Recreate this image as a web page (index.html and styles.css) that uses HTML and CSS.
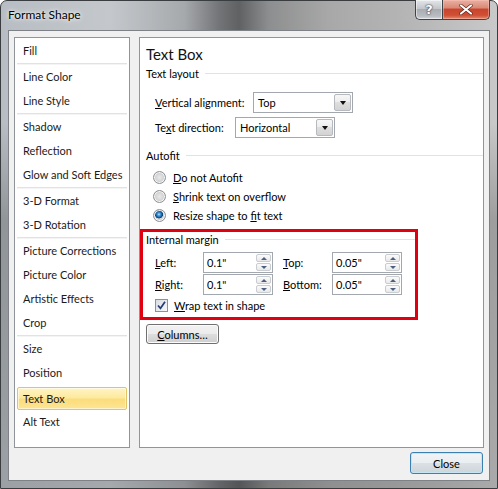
FILE: index.html
```html
<!DOCTYPE html>
<html>
<head>
<meta charset="utf-8">
<title>Format Shape</title>
<link rel="stylesheet" href="styles.css">
</head>
<body>
<div class="window">
  <div class="titlebar">
    <span class="title">Format Shape</span>
    <div class="caption">
      <div class="cbtn help">?</div>
      <div class="cbtn close">
        <svg width="14" height="11" viewBox="0 0 14 11"><path d="M2 1.5 L12 9.5 M12 1.5 L2 9.5" stroke="#5a1f14" stroke-width="3.4" stroke-linecap="round"/><path d="M2 1.5 L12 9.5 M12 1.5 L2 9.5" stroke="#fff" stroke-width="2.2" stroke-linecap="round"/></svg>
      </div>
    </div>
  </div>
  <div class="client">
    <div class="panes">
      <ul class="nav">
        <li class="item">Fill</li>
        <li class="sep"></li>
        <li class="item">Line Color</li>
        <li class="item">Line Style</li>
        <li class="sep"></li>
        <li class="item">Shadow</li>
        <li class="item">Reflection</li>
        <li class="item">Glow and Soft Edges</li>
        <li class="sep"></li>
        <li class="item">3-D Format</li>
        <li class="item">3-D Rotation</li>
        <li class="sep"></li>
        <li class="item">Picture Corrections</li>
        <li class="item">Picture Color</li>
        <li class="item">Artistic Effects</li>
        <li class="item">Crop</li>
        <li class="sep"></li>
        <li class="item">Size</li>
        <li class="item">Position</li>
        <li class="item selected">Text Box</li>
        <li class="item">Alt Text</li>
      </ul>
      <div class="content">
        <div class="pane-title">Text Box</div>
        <div class="group-head head-layout">Text layout</div>
        <div class="field-row row-valign">
          <span class="lbl lbl-valign"><u>V</u>ertical alignment:</span>
          <div class="combo"><span class="combo-val">Top</span><span class="combo-btn"><span class="tri"></span></span></div>
        </div>
        <div class="field-row row-dir">
          <span class="lbl lbl-dir">Te<u>x</u>t direction:</span>
          <div class="combo"><span class="combo-val">Horizontal</span><span class="combo-btn"><span class="tri"></span></span></div>
        </div>
        <div class="group-head head-autofit">Autofit</div>
        <div class="radios">
          <div class="radio-row"><span class="radio"></span><span class="rtext"><u>D</u>o not Autofit</span></div>
          <div class="radio-row"><span class="radio"></span><span class="rtext"><u>S</u>hrink text on overflow</span></div>
          <div class="radio-row"><span class="radio on"></span><span class="rtext">Resize shape to <u>f</u>it text</span></div>
        </div>
        <div class="highlight">
          <div class="group-head head-margin">Internal margin</div>
          <div class="mgrid">
            <span class="lbl"><u>L</u>eft:</span>
            <div class="spin-input"><span class="val">0.1"</span><span class="spin"><span class="sb up"></span><span class="sb dn"></span></span></div>
            <span></span>
            <span class="lbl"><u>T</u>op:</span>
            <div class="spin-input"><span class="val">0.05"</span><span class="spin"><span class="sb up"></span><span class="sb dn"></span></span></div>
            <span class="lbl"><u>R</u>ight:</span>
            <div class="spin-input"><span class="val">0.1"</span><span class="spin"><span class="sb up"></span><span class="sb dn"></span></span></div>
            <span></span>
            <span class="lbl"><u>B</u>ottom:</span>
            <div class="spin-input"><span class="val">0.05"</span><span class="spin"><span class="sb up"></span><span class="sb dn"></span></span></div>
          </div>
          <div class="check-row">
            <span class="check"><svg width="11" height="11" viewBox="0 0 11 11"><path d="M2 5.5 L4.5 8.3 L9 1.8" fill="none" stroke="#253b78" stroke-width="1.7"/></svg></span>
            <span class="ctext"><u>W</u>rap text in shape</span>
          </div>
        </div>
        <button class="btn btn-columns"><u>C</u>olumns…</button>
      </div>
    </div>
    <div class="footer">
      <button class="btn btn-default">Close</button>
    </div>
  </div>
</div>
</body>
</html>
```

FILE: styles.css
```css
* { box-sizing: border-box; margin: 0; padding: 0; }
html, body { width: 498px; height: 489px; overflow: hidden; background: #fff; }
body { font-family: Lato, "Liberation Sans", sans-serif; font-size: 11px; color: #000; }
u { text-decoration: underline; text-underline-offset: 1px; }

.window {
  width: 498px; height: 489px;
  display: flex; flex-direction: column;
  border: 1px solid #3a3d40;
  border-radius: 7px 7px 0 0;
  padding: 0 7px 7px 7px;
  background:
    linear-gradient(180deg, rgba(0,0,0,0) 0, rgba(0,0,0,0) 25%, rgba(30,30,30,.25) 45%, rgba(30,30,30,.18) 100%),
    linear-gradient(90deg, #b7bdc3 0%, #c4c8cc 22%, #a6a9ac 37%, #727477 44%, #5f6163 48%, #8d8e8f 54%, #a8a8a8 66%, #b9b9b9 86%, #c9c9c9 100%);
}

.titlebar { height: 29px; display: flex; align-items: flex-start; }
.title { margin-left: 0; line-height: 28px; font-size: 12px; color: #000; text-shadow: 0 0 6px rgba(255,255,255,.9), 0 0 3px rgba(255,255,255,.9); }
.caption { margin-left: auto; margin-top: -1px; display: flex; }
.cbtn { height: 20px; display: flex; align-items: center; justify-content: center; border: 1px solid #3f4347; border-top: none; }
.help {
  width: 27px; border-radius: 0 0 0 5px; border-right: none;
  background: linear-gradient(#e4e7ea, #c3c7cb 45%, #a9adb1 50%, #b9bdc1 85%, #d5d8db);
  color: #fff; font-family: "DejaVu Sans", sans-serif; font-weight: bold; font-size: 13px;
  text-shadow: 0 0 2px #333, 0 0 1px #222;
  box-shadow: inset 0 0 0 1px rgba(255,255,255,.5);
}
.close {
  width: 48px; border-radius: 0 0 5px 0;
  background: linear-gradient(#eab0a2, #d98b78 40%, #c9452d 50%, #cf4f34 80%, #e48a6c);
  box-shadow: inset 0 0 0 1px rgba(255,200,190,.45);
}

.client {
  width: 482px; height: 451px;
  background: #f0f0f0;
  border: 1px solid #7e8286;
  padding: 6px 5px 0 5px;
  display: flex; flex-direction: column;
}
.panes { display: flex; gap: 9px; height: 411px; }

.nav {
  width: 116px; height: 411px;
  background: #fff; border: 1px solid #8f959b;
  list-style: none; padding: 1px 2px 0 2px;
}
.item { height: 24px; line-height: 24px; padding-left: 6px; white-space: nowrap; color: #1b1b1b; }
.sep { height: 2px; background: linear-gradient(#e2e2e2 50%, #f4f4f4 50%); }
.selected {
  margin-top: 2px; height: 23px; line-height: 21px; padding-left: 5px;
  border: 1px solid #e2c36a; border-radius: 2px;
  background: linear-gradient(#fff4c4, #fde9a0 45%, #fcdd7c 55%, #fde594);
  box-shadow: inset 0 0 0 1px rgba(255,255,255,.55);
}

.content {
  flex: 1; height: 411px;
  background: #fff; border: 1px solid #8f959b;
  display: flex; flex-direction: column; align-items: flex-start;
}
.pane-title { margin: 6px 0 0 6px; font-size: 15px; line-height: 20px; color: #111; }
.group-head { display: flex; align-items: center; height: 16px; margin-left: 6px; align-self: stretch; white-space: nowrap; }
.group-head::after { content: ""; flex: 1; height: 1px; background: #dfe3e6; margin-left: 6px; }
.head-layout { margin-top: 1px; }
.head-autofit { margin-top: 9px; }

.field-row { display: flex; align-items: center; height: 21px; margin-left: 15px; }
.row-valign { margin-top: 11px; }
.row-dir { margin-top: 4px; }
.lbl { white-space: nowrap; }
.lbl-valign { width: 98px; }
.lbl-dir { width: 80px; }

.combo {
  width: 100px; height: 21px;
  border: 1px solid #a3a8ae; background: #fff;
  display: flex; align-items: center; padding: 1px;
}
.combo-val { flex: 1; padding-left: 3px; }
.combo-btn {
  width: 17px; height: 17px;
  border: 1px solid #b6b9bd; border-radius: 2px;
  background: linear-gradient(#f7f7f7, #ececec 50%, #dedede 50%, #d3d3d3);
  display: flex; align-items: center; justify-content: center;
}
.tri { width: 0; height: 0; border-left: 3.5px solid transparent; border-right: 3.5px solid transparent; border-top: 4px solid #111; }

.radios { margin-top: 5px; margin-left: 13px; }
.radio-row { display: flex; align-items: center; height: 19px; }
.radio {
  width: 13px; height: 13px; border-radius: 50%;
  border: 1px solid #8d9196;
  background: radial-gradient(circle at 50% 50%, #e9e9e9 0, #d7d7d7 45%, #c4c4c4 70%, #f1f1f1 100%);
  box-shadow: inset 0 0 0 1px #f6f6f6;
}
.radio.on {
  background:
    radial-gradient(circle at 45% 40%, #c8ecff 0, #4fa7e3 1.2px, #1665a8 2.8px, #0d3f73 3.8px, rgba(0,0,0,0) 4.3px),
    radial-gradient(circle at 50% 50%, #e9e9e9 0, #d7d7d7 45%, #c4c4c4 70%, #f1f1f1 100%);
}
.rtext { margin-left: 7px; white-space: nowrap; }

.highlight {
  margin-top: 4px; width: 278px; height: 91px;
  border: 3px solid #e1000f;
  padding: 0 0 0 3px;
  display: flex; flex-direction: column;
}
.head-margin { margin-left: 0; height: 15px; }
.mgrid {
  margin-top: 5px; margin-left: 9px;
  display: grid;
  grid-template-columns: 48px 70px 10px 49px 70px;
  grid-auto-rows: 21px; row-gap: 1px;
  align-items: center;
}
.spin-input {
  width: 70px; height: 21px;
  border: 1px solid #a3a8ae; background: #fff;
  display: flex; align-items: stretch; padding: 1px;
}
.val { flex: 1; padding-left: 2px; line-height: 17px; }
.spin { width: 15px; display: flex; flex-direction: column; gap: 1px; }
.sb {
  flex: 1; border: 1px solid #c9ccd0; border-radius: 2px;
  background: linear-gradient(#fbfbfb, #e9e9e9);
  display: flex; align-items: center; justify-content: center;
}
.sb::before { content: ""; width: 0; height: 0; border-left: 3px solid transparent; border-right: 3px solid transparent; }
.up::before { border-bottom: 3px solid #4b5f80; }
.dn::before { border-top: 3px solid #4b5f80; }

.check-row { display: flex; align-items: center; height: 15px; margin-top: 3px; margin-left: 9px; }
.check {
  width: 13px; height: 13px; border: 1px solid #8e9196;
  background: linear-gradient(135deg, #d9dde2, #f7f8f9);
  display: flex; align-items: center; justify-content: center;
}
.ctext { margin-left: 6px; white-space: nowrap; }

.btn {
  font-family: inherit; font-size: 11px; color: #000;
  border: 1px solid #707070; border-radius: 3px;
  background: linear-gradient(#f2f2f2, #ebebeb 50%, #dddddd 50%, #cfcfcf);
  box-shadow: inset 0 0 0 1px #fbfbfb;
}
.btn-columns { margin-top: 4px; margin-left: 6px; width: 73px; height: 20px; }

.footer { display: flex; justify-content: flex-end; padding-top: 4px; padding-right: 1px; }
.btn-default {
  width: 73px; height: 22px;
  border-color: #3c7fb1;
  box-shadow: inset 0 0 0 1px #c4e5f6;
  background: linear-gradient(#f1f4f6, #e9eef1 50%, #dbe1e5 50%, #ced5da);
}
```
